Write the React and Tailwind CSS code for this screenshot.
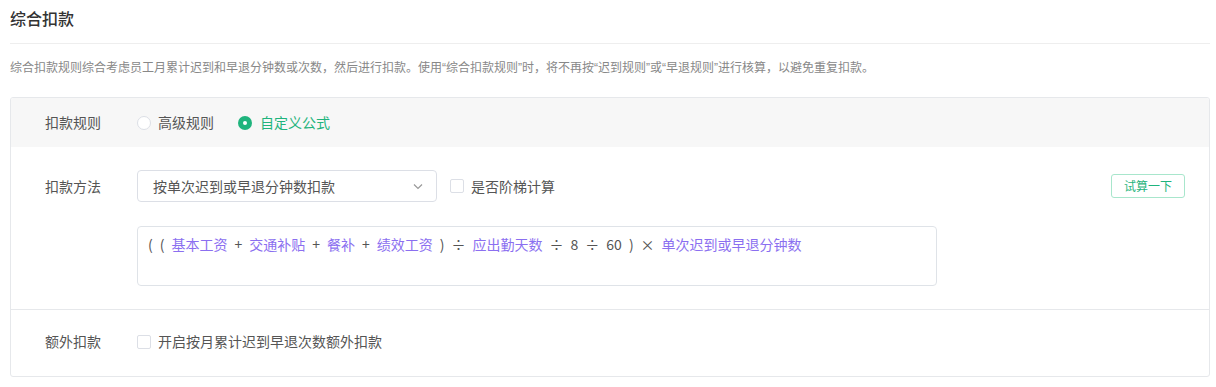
import React from 'react';

const tokens = [
  { t: '(', op: true },
  { t: '(', op: true },
  { t: '基本工资' },
  { t: '+', op: true },
  { t: '交通补贴' },
  { t: '+', op: true },
  { t: '餐补' },
  { t: '+', op: true },
  { t: '绩效工资' },
  { t: ')', op: true },
  { t: '÷', op: true },
  { t: '应出勤天数' },
  { t: '÷', op: true },
  { t: '8', op: true },
  { t: '÷', op: true },
  { t: '60', op: true },
  { t: ')', op: true },
  { t: '×', op: true },
  { t: '单次迟到或早退分钟数' },
];

function Checkbox() {
  return <span className="inline-block w-[14px] h-[14px] rounded-[2px] border border-[#dcdfe6] bg-white" />;
}

function Q({ children }) {
  return <span style={{ fontFamily: '"Liberation Sans", sans-serif' }}>{children}</span>;
}

function App() {
  return (
    <div
      className="w-[1216px] h-[387px] bg-white pl-[10px] pt-[6px] text-[14px] text-[#555]"
      style={{ fontFamily: '"Noto Sans CJK SC", "Noto Sans", sans-serif' }}
    >
      <div className="w-[1200px]">
        <h1 className="text-[16px] leading-[24px] font-medium text-[#333]">综合扣款</h1>
        <div className="mt-[13px] border-t border-[#eeeeee]" />
        <p className="mt-[14px] text-[12px] leading-[18px] text-[#888]">
          综合扣款规则综合考虑员工月累计迟到和早退分钟数或次数，然后进行扣款。使用<Q>“</Q>综合扣款规则<Q>”</Q>时，将不再按<Q>“</Q>迟到规则<Q>”</Q>或<Q>“</Q>早退规则<Q>”</Q>进行核算，以避免重复扣款。
        </p>

        <div className="mt-[20px] border border-[#e6e8eb] rounded-[3px] overflow-hidden">
          <div className="h-[49px] bg-[#f7f7f7] flex items-center pl-[34px]">
            <span className="w-[92px]">扣款规则</span>
            <label className="flex items-center">
              <span className="w-[14px] h-[14px] rounded-full border border-[#dcdfe6] bg-white" />
              <span className="ml-[7px]">高级规则</span>
            </label>
            <label className="flex items-center ml-[24px]">
              <span className="w-[14px] h-[14px] rounded-full bg-[#1fb47d] flex items-center justify-center">
                <span className="w-[4px] h-[4px] rounded-full bg-white" />
              </span>
              <span className="ml-[8px] text-[#1fb47d]">自定义公式</span>
            </label>
          </div>

          <div className="pt-[23px] pb-[23px] pl-[34px] pr-[24px]">
            <div className="flex items-center">
              <span className="w-[92px]">扣款方法</span>
              <div className="w-[300px] h-[32px] border border-[#dcdfe6] rounded-[4px] flex items-center justify-between pl-[15px] pr-[12px]">
                <span className="text-[#555]">按单次迟到或早退分钟数扣款</span>
                <svg width="12" height="12" viewBox="0 0 12 12" fill="none">
                  <path d="M2 4.5L6 8.5L10 4.5" stroke="#999" strokeWidth="1.2" />
                </svg>
              </div>
              <label className="flex items-center ml-[13px]">
                <Checkbox />
                <span className="ml-[7px]">是否阶梯计算</span>
              </label>
              <button className="ml-auto w-[74px] h-[24px] border border-[#a8e6cc] rounded-[3px] text-[12px] text-[#1fb47d]">
                试算一下
              </button>
            </div>

            <div className="ml-[92px] mt-[24px] w-[800px] h-[60px] border border-[#dfe3e8] rounded-[4px] px-[10px] pt-[5px]">
              <div className="flex items-center gap-x-[7px] leading-[24px]">
                {tokens.map((tk, i) => (
                  <span key={i} className={tk.op ? 'text-[#555]' : 'text-[#8b6ff0]'}>
                    {tk.t}
                  </span>
                ))}
              </div>
            </div>
          </div>

          <div className="border-t border-[#e6e8eb] h-[67px] flex items-center pl-[34px] pb-[3px]">
            <span className="w-[92px]">额外扣款</span>
            <label className="flex items-center">
              <Checkbox />
              <span className="ml-[7px]">开启按月累计迟到早退次数额外扣款</span>
            </label>
          </div>
        </div>
      </div>
    </div>
  );
}

export default App;
